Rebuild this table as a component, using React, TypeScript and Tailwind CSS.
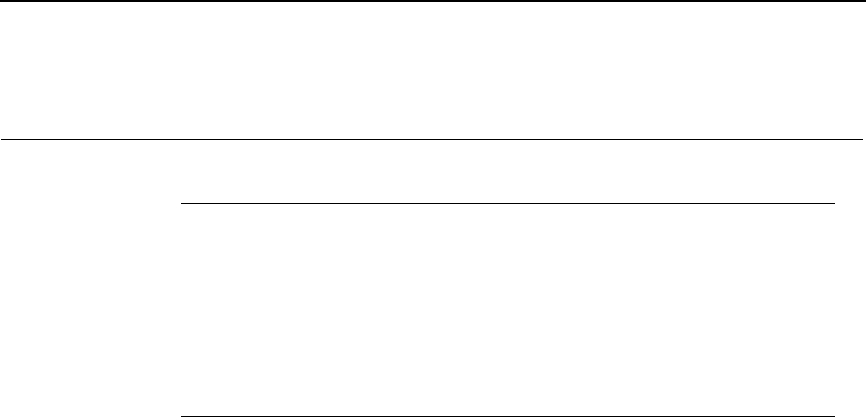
import React from 'react';

export default function App() {
  return (
    <div className="w-[866px] h-[420px] bg-white overflow-hidden font-['Liberation_Sans',sans-serif]">
      {/* Top rule */}
      <div className="h-[139px] border-t-2 border-black" />

      {/* Full-width divider */}
      <div className="ml-[1px] mr-[3px] border-t border-black" />

      {/* Indented panel */}
      <div className="pt-[63px]">
        <div className="ml-[181px] mr-[31px] h-[214px] border-t border-b border-black" />
      </div>
    </div>
  );
}
